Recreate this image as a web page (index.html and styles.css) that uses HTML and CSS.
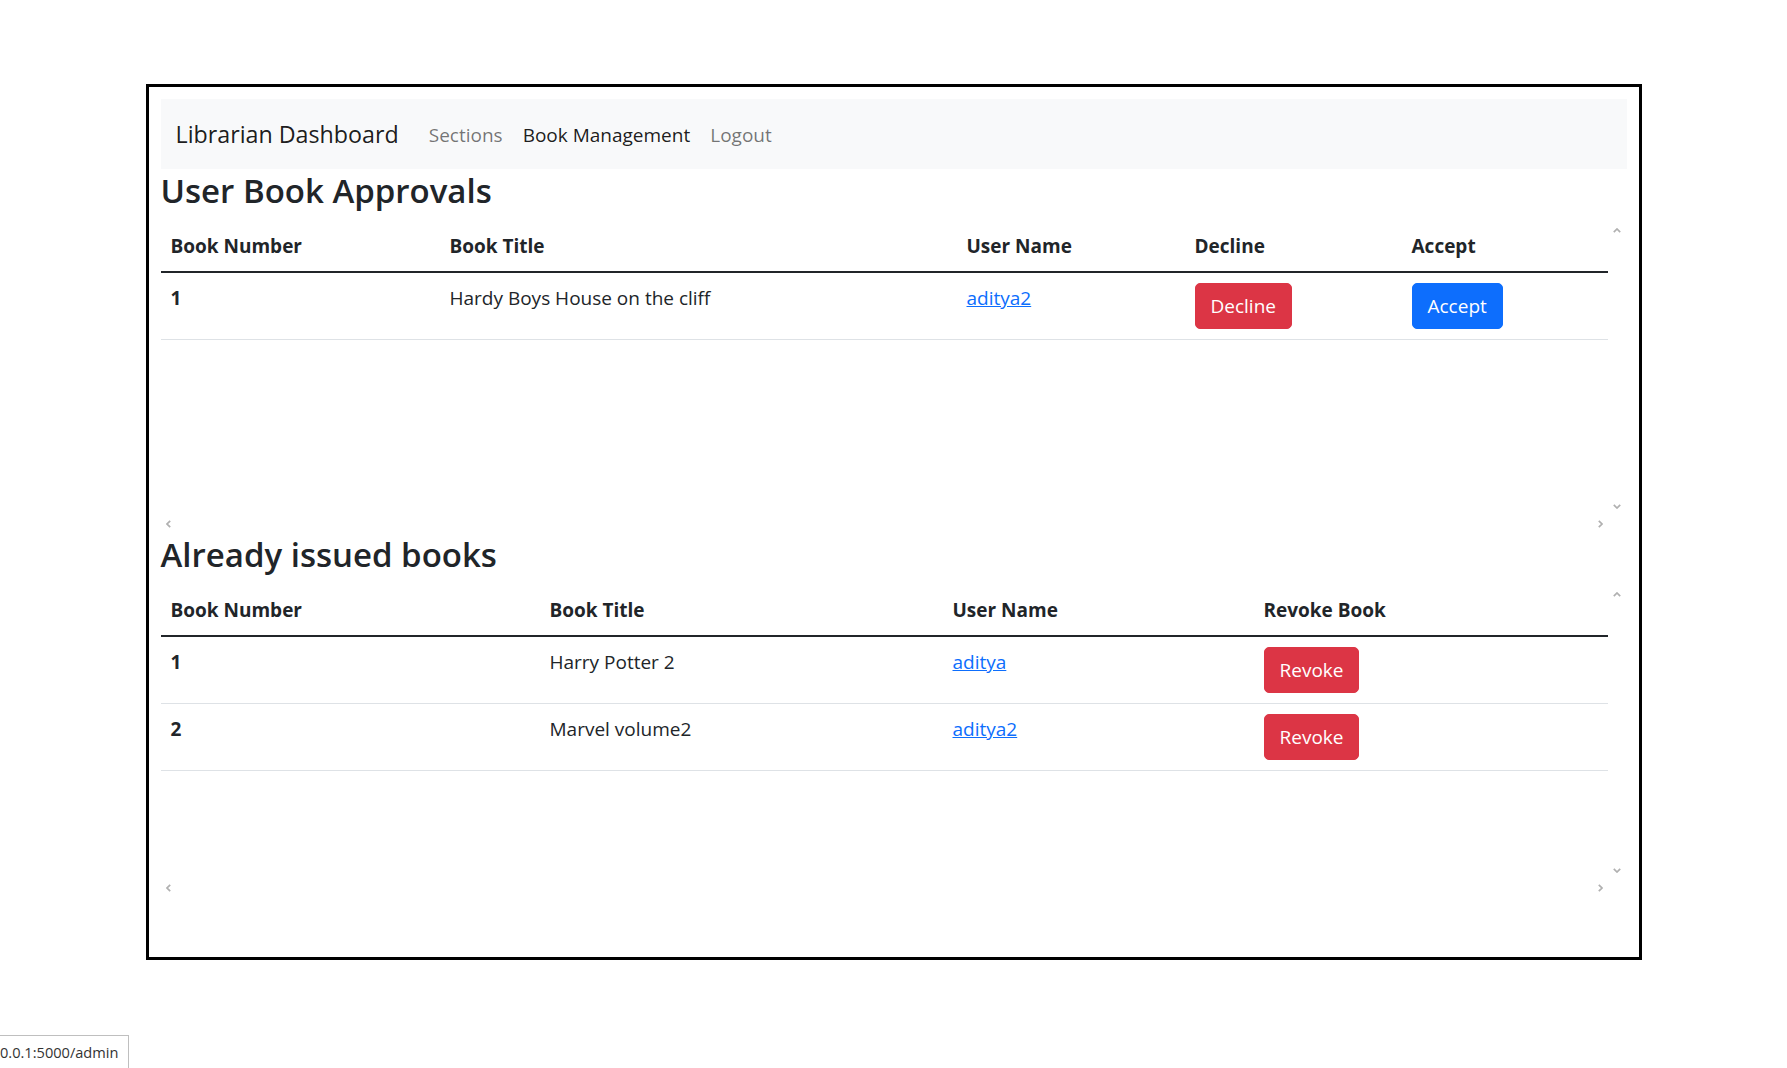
FILE: index.html
```html
<!DOCTYPE html>
<html lang="en">
<head>
<meta charset="utf-8">
<title>Librarian Dashboard</title>
<link rel="stylesheet" href="styles.css">
</head>
<body>
<div class="frame">
  <nav class="navbar">
    <span class="brand">Librarian Dashboard</span>
    <ul class="nav">
      <li><a class="nav-link" href="#">Sections</a></li>
      <li><a class="nav-link active" href="#">Book Management</a></li>
      <li><a class="nav-link" href="#">Logout</a></li>
    </ul>
  </nav>

  <h3 class="title">User Book Approvals</h3>
  <div class="scroller">
    <div class="scroll-body">
      <table class="table approvals">
        <thead>
          <tr>
            <th class="a1">Book Number</th>
            <th class="a2">Book Title</th>
            <th class="a3">User Name</th>
            <th class="a4">Decline</th>
            <th class="a5">Accept</th>
          </tr>
        </thead>
        <tbody>
          <tr>
            <th>1</th>
            <td>Hardy Boys House on the cliff</td>
            <td><a class="link" href="#">aditya2</a></td>
            <td><button class="btn btn-danger">Decline</button></td>
            <td><button class="btn btn-primary">Accept</button></td>
          </tr>
        </tbody>
      </table>
    </div>
    <div class="vbar">
      <svg class="chev-v" viewBox="0 0 8 5"><polyline points="0.8,4.2 4,1 7.2,4.2"/></svg>
      <svg class="chev-v" viewBox="0 0 8 5"><polyline points="0.8,0.8 4,4 7.2,0.8"/></svg>
    </div>
    <div class="hbar">
      <svg class="chev-h" viewBox="0 0 5 8"><polyline points="4.2,0.8 1,4 4.2,7.2"/></svg>
      <svg class="chev-h" viewBox="0 0 5 8"><polyline points="0.8,0.8 4,4 0.8,7.2"/></svg>
    </div>
    <div class="corner"></div>
  </div>

  <h3 class="title">Already issued books</h3>
  <div class="scroller">
    <div class="scroll-body">
      <table class="table issued">
        <thead>
          <tr>
            <th class="b1">Book Number</th>
            <th class="b2">Book Title</th>
            <th class="b3">User Name</th>
            <th class="b4">Revoke Book</th>
          </tr>
        </thead>
        <tbody>
          <tr>
            <th>1</th>
            <td>Harry Potter 2</td>
            <td><a class="link" href="#">aditya</a></td>
            <td><button class="btn btn-danger">Revoke</button></td>
          </tr>
          <tr>
            <th>2</th>
            <td>Marvel volume2</td>
            <td><a class="link" href="#">aditya2</a></td>
            <td><button class="btn btn-danger">Revoke</button></td>
          </tr>
        </tbody>
      </table>
    </div>
    <div class="vbar">
      <svg class="chev-v" viewBox="0 0 8 5"><polyline points="0.8,4.2 4,1 7.2,4.2"/></svg>
      <svg class="chev-v" viewBox="0 0 8 5"><polyline points="0.8,0.8 4,4 7.2,0.8"/></svg>
    </div>
    <div class="hbar">
      <svg class="chev-h" viewBox="0 0 5 8"><polyline points="4.2,0.8 1,4 4.2,7.2"/></svg>
      <svg class="chev-h" viewBox="0 0 5 8"><polyline points="0.8,0.8 4,4 0.8,7.2"/></svg>
    </div>
    <div class="corner"></div>
  </div>
</div>

<div class="status">0.0.1:5000/admin</div>
</body>
</html>
```

FILE: styles.css
```css
* {
  box-sizing: border-box;
}

html, body {
  margin: 0;
  padding: 0;
  background: #fff;
}

body {
  font-family: "Open Sans", "Noto Sans", "Liberation Sans", sans-serif;
  font-size: 19px;
  line-height: 30px;
  color: #212529;
}

.frame {
  width: 1496px;
  margin: 84px auto 0;
  border: 3px solid #000;
  padding: 12px 12px 60px;
}

/* navbar */
.navbar {
  display: flex;
  align-items: center;
  background: #f8f9fa;
  padding: 10px 15px;
}

.brand {
  font-size: 23.25px;
  line-height: 37.5px;
  padding: 6.75px 0 4.75px;
  margin-right: 20px;
  color: rgba(0, 0, 0, 0.9);
}

.nav {
  display: flex;
  list-style: none;
  margin: 0;
  padding: 0;
}

.nav-link {
  display: block;
  padding: 11px 10px 9px;
  font-size: 19px;
  text-decoration: none;
  color: rgba(0, 0, 0, 0.55);
}

.nav-link.active {
  color: rgba(0, 0, 0, 0.9);
}

/* headings */
.title {
  margin: 0 0 10px;
  padding-top: 1px;
  height: 42px;
  font-size: 33px;
  line-height: 42px;
  font-weight: 600;
  color: #212529;
}

/* scroll container with visible (empty) scrollbars */
.scroller {
  height: 312px;
  display: grid;
  grid-template-columns: 1fr 19px;
  grid-template-rows: 1fr 18px;
}

.scroll-body {
  overflow: hidden;
}

.vbar {
  display: flex;
  flex-direction: column;
  justify-content: space-between;
  align-items: center;
  padding: 6.5px 0;
}

.hbar {
  display: flex;
  justify-content: space-between;
  align-items: center;
  padding: 0 5px 0 5px;
}

.chev-v {
  width: 8px;
  height: 5px;
  display: block;
}

.chev-h {
  width: 5px;
  height: 8px;
  display: block;
}

.chev-v polyline,
.chev-h polyline {
  fill: none;
  stroke: #b0b0b0;
  stroke-width: 1.7;
}

/* tables */
.table {
  width: 100%;
  border-collapse: collapse;
  table-layout: fixed;
}

.table th,
.table td {
  padding: 10px;
  text-align: left;
  vertical-align: top;
  font-size: 19px;
  line-height: 30px;
}

.table th {
  font-weight: 700;
}

.table thead th {
  border-bottom: 2px solid #212529;
}

.table tbody th,
.table tbody td {
  border-bottom: 1px solid #dee2e6;
}

.a1 { width: 279px; }
.a2 { width: 517px; }
.a3 { width: 228px; }
.a4 { width: 217px; }
.a5 { width: auto; }

.b1 { width: 379px; }
.b2 { width: 403px; }
.b3 { width: 311px; }
.b4 { width: auto; }

.link {
  color: #0d6efd;
  text-decoration: underline;
}

.btn {
  display: inline-block;
  font-family: inherit;
  font-size: 19px;
  line-height: 30px;
  font-weight: 400;
  padding: 7px 15px;
  border: 1px solid transparent;
  border-radius: 5px;
  color: #fff;
  cursor: pointer;
}

.btn-danger {
  background: #dc3545;
  border-color: #dc3545;
}

.btn-primary {
  background: #0d6efd;
  border-color: #0d6efd;
}

/* browser status bubble */
.status {
  position: fixed;
  left: 0;
  bottom: 0;
  width: 129px;
  height: 33px;
  background: #fff;
  border-top: 1px solid #bfbfbf;
  border-right: 1px solid #bfbfbf;
  font-size: 14.6px;
  line-height: 33px;
  color: #333;
  padding-left: 0;
  white-space: nowrap;
  overflow: hidden;
}
```
